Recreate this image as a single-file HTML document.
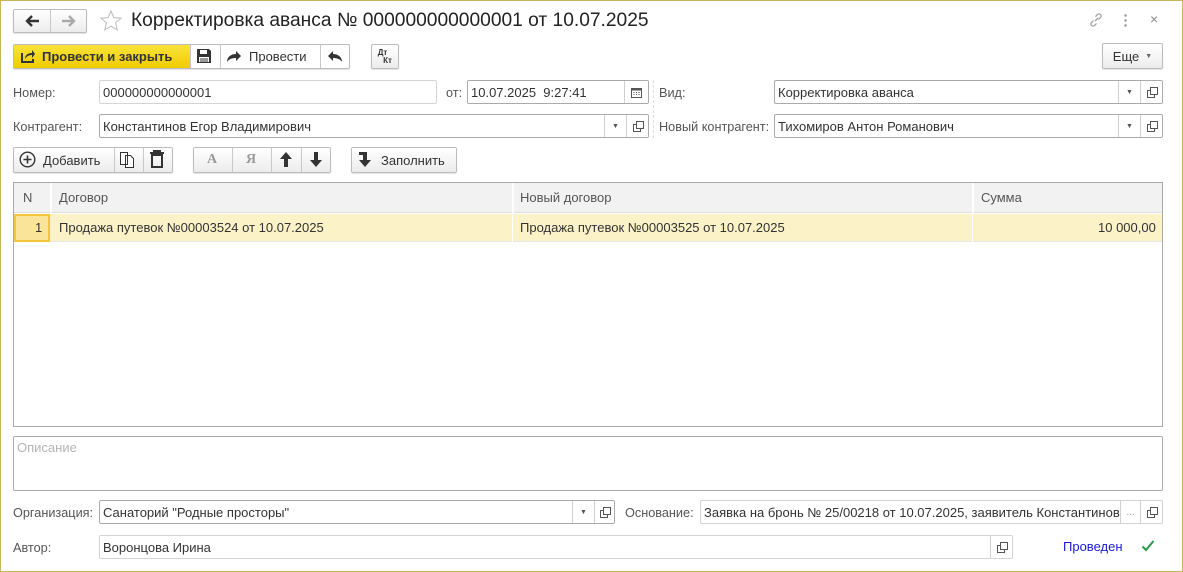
<!DOCTYPE html><html><head><meta charset="utf-8"><style>
*{box-sizing:border-box}
body{margin:0;width:1183px;height:572px;background:#fff;font-family:"Liberation Sans",Arial,sans-serif;font-size:13px;color:#333;position:relative;overflow:hidden}
.a{position:absolute}
.win{left:0;top:0;width:1183px;height:572px;border:1px solid #c9b45e}
.btn{position:absolute;border:1px solid #bdbdbd;border-radius:2px;background:linear-gradient(#fff,#ececec);box-shadow:0 1px 1px rgba(0,0,0,.12);display:flex;align-items:center;justify-content:center;color:#333}
.inp{position:absolute;border:1px solid #aaa;border-radius:2px;background:#fff;padding-left:3px;line-height:23px;color:#333;white-space:nowrap;overflow:hidden}
.inp.ro{border-color:#d4d4d4}
.lbl{position:absolute;color:#555;line-height:24px;font-size:12.7px;top:1px}
.sb{position:absolute;top:0;bottom:0;width:22px;border-left:1px solid #d0d0d0;display:flex;align-items:center;justify-content:center;color:#555;font-size:7px;background:#fff}
.op{width:8px;height:8px;border:1px solid #555;position:relative;background:#fff;margin:3px 0 0 -2px}
.op:after{content:"";position:absolute;left:2px;top:-4px;width:6px;height:6px;border:1px solid #555;background:#fff}
</style></head><body>
<div class="a win"></div>
<div class="btn" style="left:13px;top:9px;width:74px;height:24px"></div>
<div class="a" style="left:50px;top:10px;width:1px;height:22px;background:#c8c8c8"></div>
<svg class="a" style="left:24px;top:14px" width="16" height="14" viewBox="0 0 16 14"><path d="M15 7H4M8 2L3 7l5 5" fill="none" stroke="#333" stroke-width="2.4"/></svg>
<svg class="a" style="left:61px;top:14px" width="16" height="14" viewBox="0 0 16 14"><path d="M1 7h11M8 2l5 5-5 5" fill="none" stroke="#aaa" stroke-width="2.4"/></svg>
<svg class="a" style="left:99px;top:9px" width="24" height="24" viewBox="0 0 24 24"><path d="M12 2l2.9 6.6 7.1.6-5.4 4.7 1.6 7-6.2-3.7-6.2 3.7 1.6-7L2 9.2l7.1-.6z" fill="none" stroke="#bbb" stroke-width="1"/></svg>
<div class="a" style="left:131px;top:8px;font-size:19.2px;color:#222;line-height:26px">Корректировка аванса № 000000000000001 от 10.07.2025</div>
<svg class="a" style="left:1088px;top:12px" width="16" height="16" viewBox="0 0 16 16"><path d="M7 9l3-3M5.5 8.5l-2 2a2 2 0 003 3l2-2M10.5 7.5l2-2a2 2 0 00-3-3l-2 2" fill="none" stroke="#999" stroke-width="1.2"/></svg>
<div class="a" style="left:1124px;top:13px;width:3px;height:14px;background:radial-gradient(circle,#999 1px,transparent 1.5px) 0 0/3px 5px"></div>
<div class="a" style="left:1150px;top:11px;font-size:14px;color:#888">×</div>
<div class="btn" style="left:13px;top:44px;width:337px;height:25px;background:#fff"></div>
<div class="a" style="left:14px;top:45px;width:176px;height:23px;background:linear-gradient(#f9e23a,#f0cc00);"></div>
<svg class="a" style="left:20px;top:48px" width="16" height="16" viewBox="0 0 16 16"><path d="M2 5v9h11v-3" fill="none" stroke="#333" stroke-width="2"/><path d="M5 11c0-4 3-6 7-6V2l3 4-3 4V7c-3 0-5 1-7 4z" fill="#333"/></svg>
<div class="a" style="left:42px;top:49px;font-weight:bold;font-size:13px;color:#333">Провести и закрыть</div>
<div class="a" style="left:190px;top:45px;width:1px;height:23px;background:#c8c8c8"></div>
<svg class="a" style="left:196px;top:48px" width="16" height="16" viewBox="0 0 16 16"><path d="M1 1h12l2 2v12H1z" fill="#333"/><rect x="4" y="2" width="7" height="4" fill="#fff"/><rect x="3" y="9" width="10" height="5" fill="#fff"/><path d="M4 11h8M4 13h8" stroke="#333"/></svg>
<div class="a" style="left:220px;top:45px;width:1px;height:23px;background:#c8c8c8"></div>
<svg class="a" style="left:226px;top:48px" width="16" height="16" viewBox="0 0 16 16"><path d="M1 14c0-5 4-8 9-8V3l5 5-5 5V10c-4 0-7 1-9 4z" fill="#333"/></svg>
<div class="a" style="left:249px;top:49px;font-size:13px">Провести</div>
<div class="a" style="left:320px;top:45px;width:1px;height:23px;background:#c8c8c8"></div>
<svg class="a" style="left:327px;top:48px" width="16" height="16" viewBox="0 0 16 16"><path d="M15 14c0-5-4-8-9-8V3L1 8l5 5V10c4 0 7 1 9 4z" fill="#333"/></svg>
<div class="btn" style="left:371px;top:44px;width:28px;height:25px;font-size:8px;font-weight:bold;line-height:8px;flex-direction:column"><span style="margin-left:-5px">Дт</span><span style="margin-left:5px">Кт</span></div>
<div class="btn" style="left:1102px;top:43px;width:61px;height:26px;font-size:13px">Еще <span style="font-size:7px;margin-left:6px;color:#666">▼</span></div>
<div class="lbl" style="left:13px;top:81px">Номер:</div>
<div class="inp ro" style="left:99px;top:80px;width:338px;height:24px">000000000000001</div>
<div class="lbl" style="left:446px;top:81px">от:</div>
<div class="inp" style="left:467px;top:80px;width:182px;height:24px">10.07.2025&nbsp; 9:27:41<div class="sb" style="right:0;width:24px"><svg width="11" height="11" viewBox="0 0 11 11"><rect x="0.5" y="1.5" width="10" height="9" fill="none" stroke="#555"/><rect x="0.5" y="1.5" width="10" height="2" fill="#555"/><path d="M2.5 5.5h1M5 5.5h1M7.5 5.5h1M2.5 7.5h1M5 7.5h1M7.5 7.5h1" stroke="#555"/></svg></div></div>
<div class="a" style="left:653px;top:80px;height:58px;border-left:1px dashed #ddd"></div>
<div class="lbl" style="left:659px;top:81px">Вид:</div>
<div class="inp" style="left:774px;top:80px;width:389px;height:24px">Корректировка аванса<div class="sb" style="right:22px">▼</div><div class="sb" style="right:0"><div class="op"></div></div></div>
<div class="lbl" style="left:13px;top:115px">Контрагент:</div>
<div class="inp" style="left:99px;top:114px;width:550px;height:24px">Константинов Егор Владимирович<div class="sb" style="right:22px">▼</div><div class="sb" style="right:0"><div class="op"></div></div></div>
<div class="lbl" style="left:659px;top:115px">Новый контрагент:</div>
<div class="inp" style="left:774px;top:114px;width:389px;height:24px">Тихомиров Антон Романович<div class="sb" style="right:22px">▼</div><div class="sb" style="right:0"><div class="op"></div></div></div>
<div class="btn" style="left:13px;top:147px;width:160px;height:26px"></div>
<svg class="a" style="left:19px;top:151px" width="17" height="17" viewBox="0 0 17 17"><circle cx="8.5" cy="8.5" r="7.3" fill="none" stroke="#333" stroke-width="1.4"/><path d="M8.5 4.5v8M4.5 8.5h8" stroke="#333" stroke-width="1.6"/></svg>
<div class="a" style="left:43px;top:153px;font-size:13px">Добавить</div>
<div class="a" style="left:114px;top:148px;width:1px;height:24px;background:#c8c8c8"></div>
<svg class="a" style="left:119px;top:151px" width="18" height="18" viewBox="0 0 18 18"><path d="M1.5 1.5h7v12h-7zM6.5 4.5h5l3 3v9h-8z" fill="#fff" stroke="#333"/></svg>
<div class="a" style="left:143px;top:148px;width:1px;height:24px;background:#c8c8c8"></div>
<svg class="a" style="left:149px;top:150px" width="16" height="18" viewBox="0 0 16 18"><path d="M1 3h14M5 3V1h6v2" stroke="#333" stroke-width="2" fill="none"/><path d="M3 5h10v12H3z" fill="none" stroke="#333" stroke-width="2"/></svg>
<div class="btn" style="left:193px;top:147px;width:138px;height:26px"></div>
<div class="a" style="left:207px;top:152px;font-family:'Liberation Serif',serif;font-weight:bold;font-size:14px;color:#999">A</div>
<div class="a" style="left:232px;top:148px;width:1px;height:24px;background:#c8c8c8"></div>
<div class="a" style="left:246px;top:152px;font-family:'Liberation Serif',serif;font-weight:bold;font-size:14px;color:#999">Я</div>
<div class="a" style="left:271px;top:148px;width:1px;height:24px;background:#c8c8c8"></div>
<svg class="a" style="left:279px;top:151px" width="14" height="17" viewBox="0 0 14 17"><path d="M7 1l6 7H9v8H5V8H1z" fill="#333"/></svg>
<div class="a" style="left:301px;top:148px;width:1px;height:24px;background:#c8c8c8"></div>
<svg class="a" style="left:309px;top:151px" width="14" height="17" viewBox="0 0 14 17"><path d="M7 16l6-7H9V1H5v8H1z" fill="#333"/></svg>
<div class="btn" style="left:351px;top:147px;width:106px;height:26px"></div>
<svg class="a" style="left:358px;top:151px" width="14" height="17" viewBox="0 0 14 17"><path d="M1 1h8v8h4l-6 7-6-7h4V4H1z" fill="#333"/></svg>
<div class="a" style="left:381px;top:153px;font-size:13px">Заполнить</div>
<div class="a" style="left:13px;top:182px;width:1150px;height:245px;border:1px solid #aaa"></div>
<div class="a" style="left:14px;top:183px;width:1148px;height:30px;background:#f2f2f2;border-bottom:1px solid #ddd"></div>
<div class="a" style="left:50px;top:183px;width:2px;height:30px;background:#fff"></div>
<div class="a" style="left:512px;top:183px;width:2px;height:30px;background:#fff"></div>
<div class="a" style="left:972px;top:183px;width:2px;height:30px;background:#fff"></div>
<div class="a" style="left:23px;top:190px;color:#555">N</div>
<div class="a" style="left:59px;top:190px;color:#555">Договор</div>
<div class="a" style="left:520px;top:190px;color:#555">Новый договор</div>
<div class="a" style="left:981px;top:190px;color:#555">Сумма</div>
<div class="a" style="left:14px;top:214px;width:1148px;height:28px;background:#fbf2c8;border-bottom:1px solid #e6e6e6"></div>
<div class="a" style="left:512px;top:214px;width:1px;height:28px;background:#fff"></div>
<div class="a" style="left:972px;top:214px;width:1px;height:28px;background:#fff"></div>
<div class="a" style="left:14px;top:214px;width:36px;height:28px;background:#fae49a;border:2px solid #f3c739"></div>
<div class="a" style="left:35px;top:220px">1</div>
<div class="a" style="left:59px;top:220px">Продажа путевок №00003524 от 10.07.2025</div>
<div class="a" style="left:520px;top:220px">Продажа путевок №00003525 от 10.07.2025</div>
<div class="a" style="left:1098px;top:220px">10 000,00</div>
<div class="a" style="left:13px;top:436px;width:1150px;height:55px;border:1px solid #aaa;border-radius:2px;padding:3px 3px;color:#b5b5b5">Описание</div>
<div class="lbl" style="left:13px;top:501px">Организация:</div>
<div class="inp" style="left:99px;top:500px;width:516px;height:24px">Санаторий "Родные просторы"<div class="sb" style="right:20px">▼</div><div class="sb" style="right:0;width:20px"><div class="op"></div></div></div>
<div class="lbl" style="left:625px;top:501px">Основание:</div>
<div class="inp ro" style="left:700px;top:500px;width:463px;height:24px">Заявка на бронь № 25/00218 от 10.07.2025, заявитель Константинов<div class="sb" style="right:22px;width:20px;color:#999;font-size:10px">...</div><div class="sb" style="right:0"><div class="op"></div></div></div>
<div class="lbl" style="left:13px;top:536px">Автор:</div>
<div class="inp ro" style="left:99px;top:535px;width:914px;height:24px">Воронцова Ирина<div class="sb" style="right:0"><div class="op"></div></div></div>
<div class="a" style="left:1063px;top:539px;color:#1a1ad8">Проведен</div>
<svg class="a" style="left:1141px;top:539px" width="14" height="14" viewBox="0 0 14 14"><path d="M1.5 7.5l3.5 3.5L12.5 2" fill="none" stroke="#2a9a48" stroke-width="2"/></svg>
</body></html>
